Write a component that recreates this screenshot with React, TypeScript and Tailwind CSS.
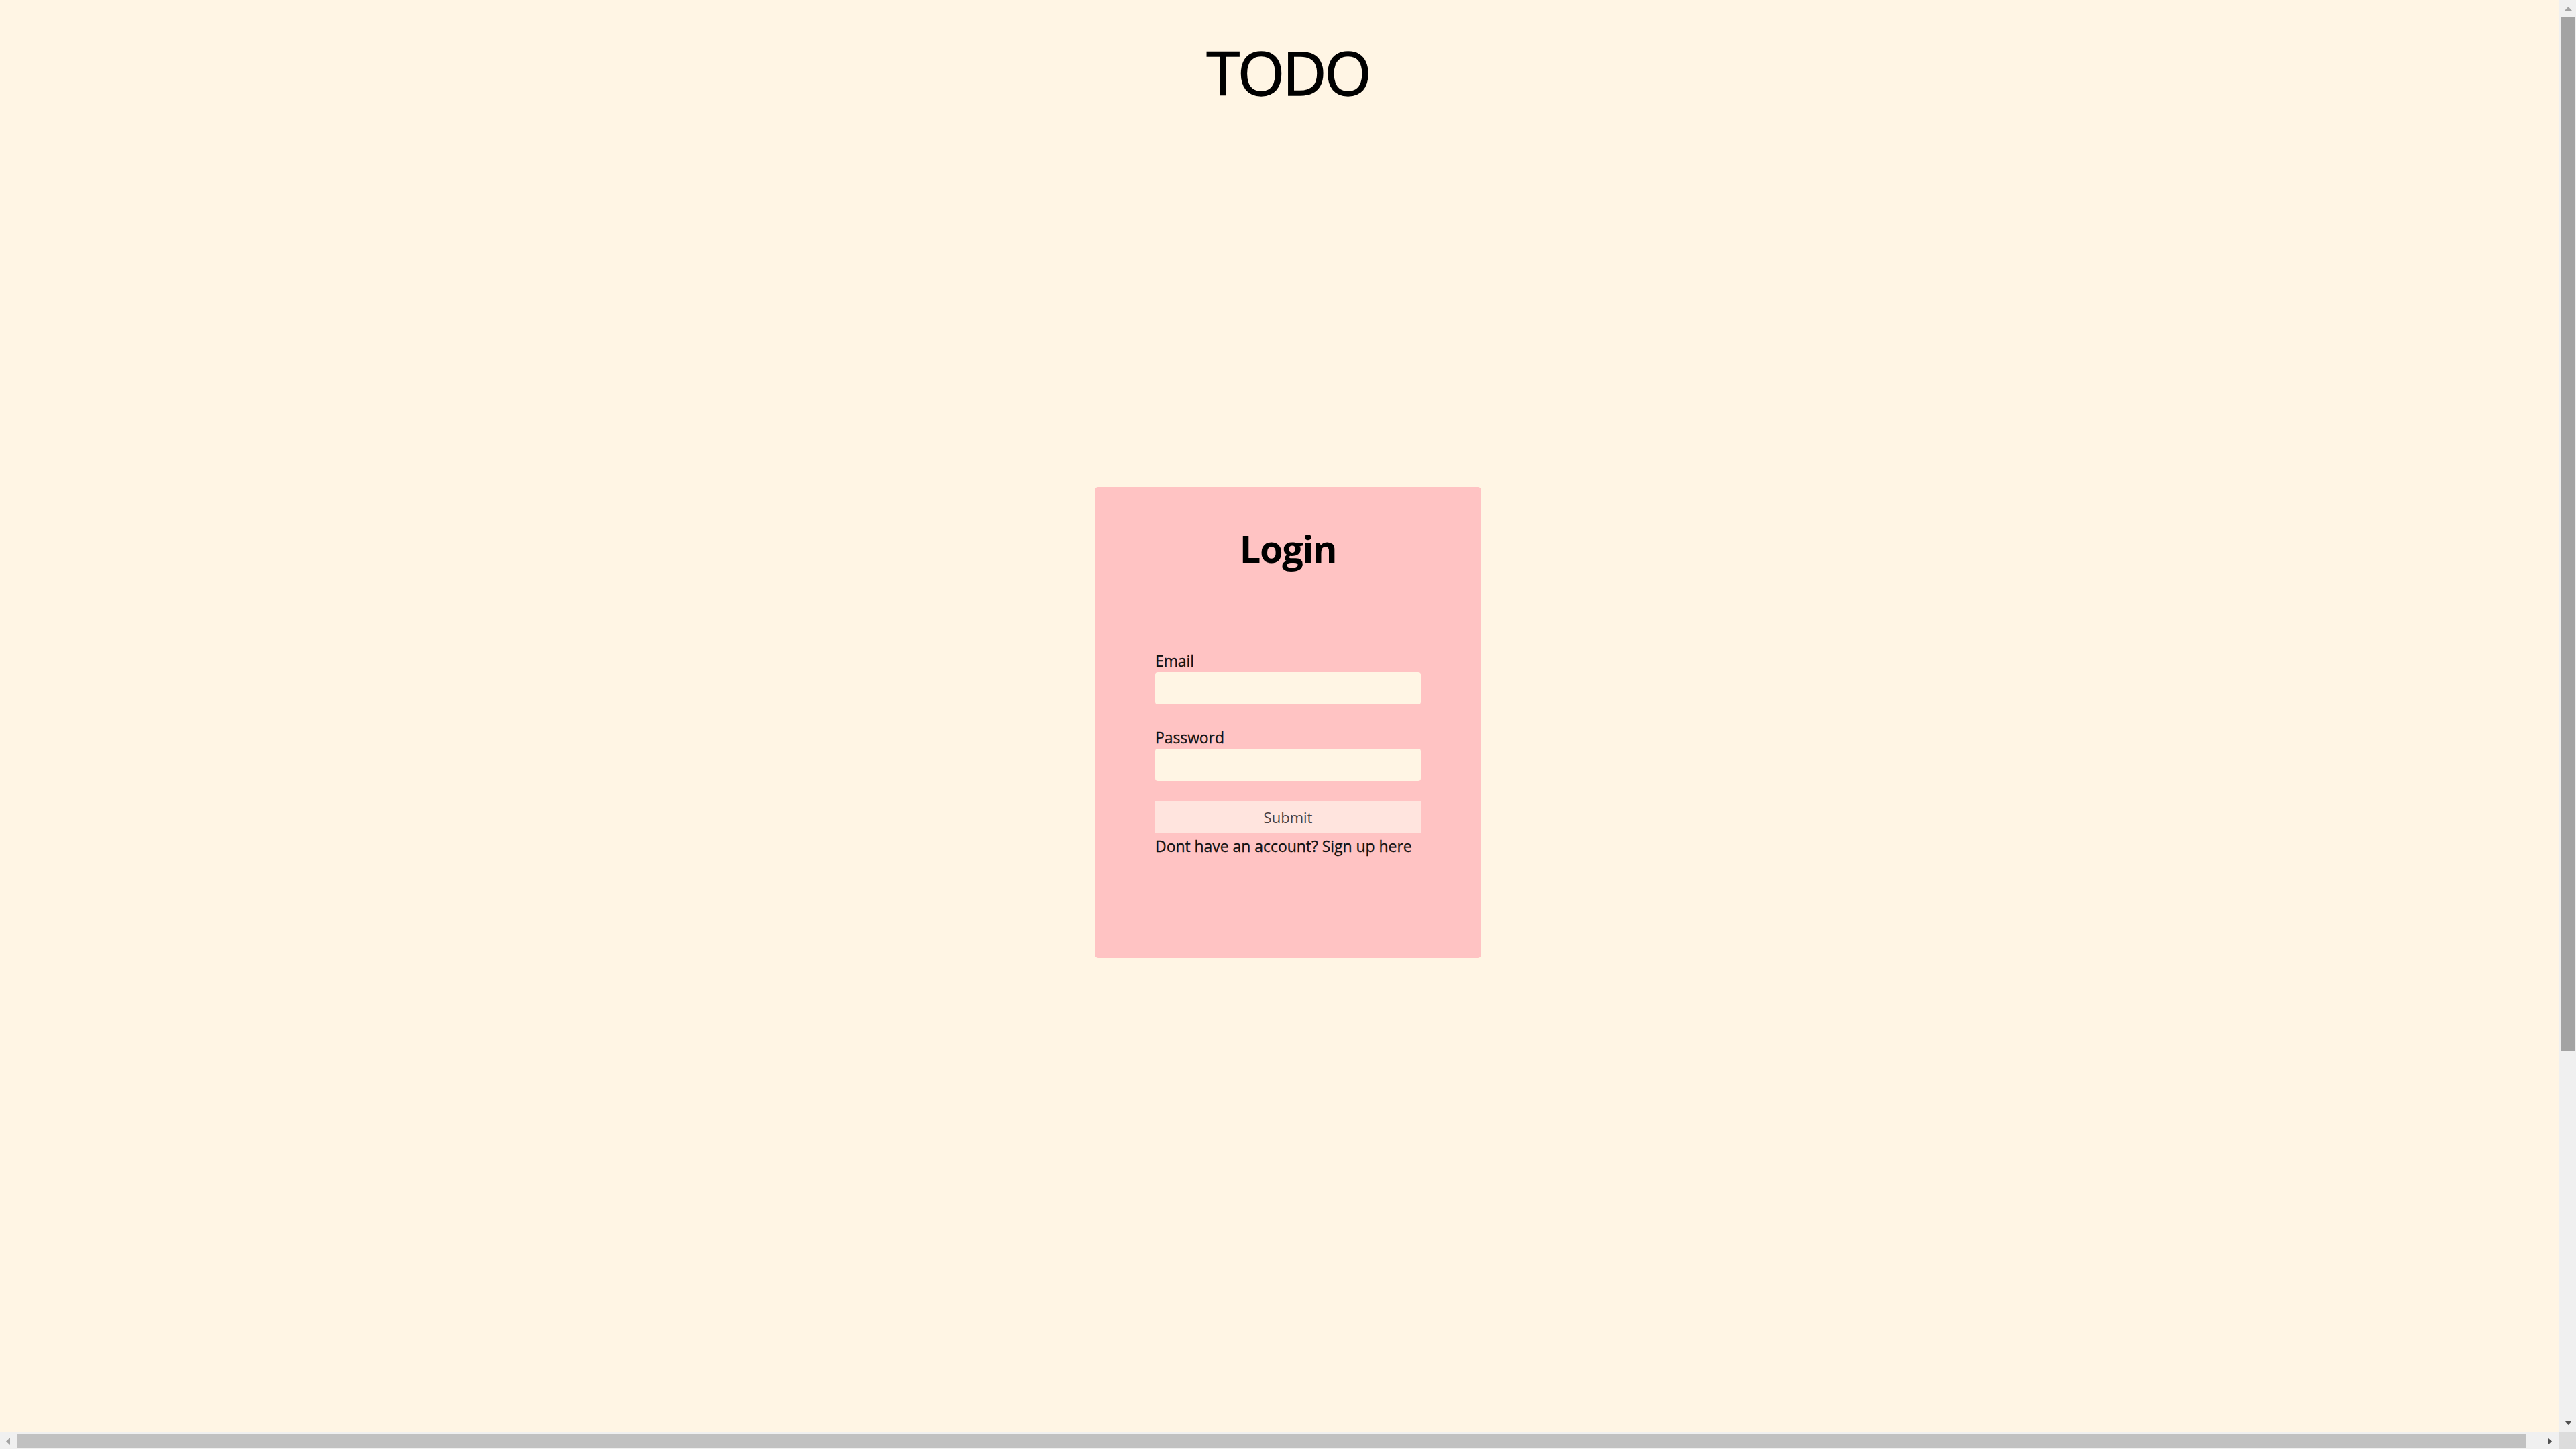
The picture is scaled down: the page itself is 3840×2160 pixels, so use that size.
import React from "react";

const font = { fontFamily: '"Open Sans", "Noto Sans", sans-serif' };

function Tri({ dir, color }: { dir: "up" | "down" | "left" | "right"; color: string }) {
  const pts: Record<string, string> = {
    up: "0,6 5.5,0 11,6",
    down: "0,0 11,0 5.5,6",
    left: "6,0 6,11 0,5.5",
    right: "0,0 6,5.5 0,11",
  };
  const vertical = dir === "up" || dir === "down";
  return (
    <svg width={vertical ? 11 : 6} height={vertical ? 6 : 11} viewBox={vertical ? "0 0 11 6" : "0 0 6 11"}>
      <polygon points={pts[dir]} fill={color} />
    </svg>
  );
}

export default function App() {
  return (
    <div className="w-[3840px] h-[2160px] flex flex-col overflow-hidden bg-[#fff5e4]" style={font}>
      <div className="flex flex-1 min-h-0">
        <main className="flex-1 min-w-0 overflow-hidden">
          <div className="w-[3840px] flex flex-col items-center">
            <h1 className="pt-[62px] text-[90px] leading-[90px] font-medium text-black tracking-[-3px] [-webkit-text-stroke:1.5px_black]">TODO</h1>
            <div className="mt-[574px] w-[576px] h-[702px] rounded-[5px] bg-[#ffc3c3] pt-[63px] px-[90px] flex flex-col">
              <h2 className="text-center text-[56px] leading-[56px] font-bold text-black tracking-[-1.5px]">Login</h2>
              <form className="mt-[128px] flex flex-col" onSubmit={(e) => e.preventDefault()}>
                <label className="block text-[23px] leading-[24px] tracking-[-0.1px] text-[#111] [-webkit-text-stroke:0.3px_#111]">Email</label>
                <input type="email" className="mt-[5px] h-[48px] w-full rounded-[4px] bg-[#fff5e4] outline-none border-0" />
                <label className="mt-[37px] block text-[23px] leading-[24px] tracking-[-0.1px] text-[#111] [-webkit-text-stroke:0.3px_#111]">Password</label>
                <input type="password" className="mt-[5px] h-[48px] w-full rounded-[4px] bg-[#fff5e4] outline-none border-0" />
                <button type="submit" className="mt-[30px] h-[48px] w-full bg-[#ffe4de] text-[22px] leading-[22px] text-[#4a4242] flex items-center justify-center">
                  Submit
                </button>
                <p className="mt-[7px] text-[23px] leading-[24px] tracking-[-0.05px] whitespace-nowrap text-[#111] [-webkit-text-stroke:0.3px_#111]">Dont have an account? Sign up here</p>
              </form>
            </div>
          </div>
        </main>
        <div className="w-[25px] bg-[#f0f0f0] flex flex-col">
          <div className="h-[25px] flex items-start justify-center pt-[10px] pl-[2px]">
            <Tri dir="up" color="#a3a3a3" />
          </div>
          <div className="flex-1 flex flex-col px-[2px]">
            <div className="h-[1541px] bg-[#a3a3a3]" />
          </div>
          <div className="h-[25px] flex items-start justify-center pt-[8px] pl-[2px]">
            <Tri dir="down" color="#505050" />
          </div>
        </div>
      </div>
      <div className="h-[25px] flex bg-[#f0f0f0]">
        <div className="w-[25px] flex items-center justify-center pt-[1px] pr-[1px]">
          <Tri dir="left" color="#a3a3a3" />
        </div>
        <div className="flex-1 flex items-center py-[2px]">
          <div className="w-[3740px] h-full bg-[#c1c1c1]" />
        </div>
        <div className="w-[25px] flex items-center justify-center pt-[1px] pr-[4px]">
          <Tri dir="right" color="#505050" />
        </div>
        <div className="w-[25px] bg-[#dcdcdc]" />
      </div>
    </div>
  );
}
